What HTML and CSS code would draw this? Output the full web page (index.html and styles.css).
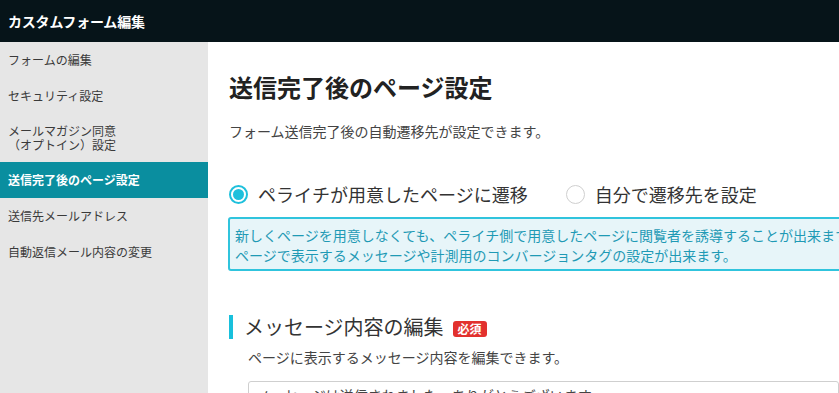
FILE: index.html
```html
<!DOCTYPE html>
<html lang="ja">
<head>
<meta charset="utf-8">
<link rel="stylesheet" href="styles.css">
</head>
<body>
<header class="topbar">カスタムフォーム編集</header>
<div class="layout">
  <nav class="sidebar">
    <div class="nav-item">フォームの編集</div>
    <div class="nav-item">セキュリティ設定</div>
    <div class="nav-item multi">メールマガジン同意<br>（オプトイン）設定</div>
    <div class="nav-item active">送信完了後のページ設定</div>
    <div class="nav-item">送信先メールアドレス</div>
    <div class="nav-item">自動返信メール内容の変更</div>
  </nav>
  <main class="main">
    <h1 class="title">送信完了後のページ設定</h1>
    <p class="desc">フォーム送信完了後の自動遷移先が設定できます。</p>
    <div class="radios">
      <label class="radio checked"><span class="dot"></span>ペライチが用意したページに遷移</label>
      <label class="radio"><span class="dot"></span>自分で遷移先を設定</label>
    </div>
    <div class="info">新しくページを用意しなくても、ペライチ側で用意したページに閲覧者を誘導することが出来ます。<br>ページで表示するメッセージや計測用のコンバージョンタグの設定が出来ます。</div>
    <h2 class="section"><span class="section-text">メッセージ内容の編集</span><span class="badge">必須</span></h2>
    <p class="sub">ページに表示するメッセージ内容を編集できます。</p>
    <div class="textarea">メッセージは送信されました。ありがとうございます。</div>
  </main>
</div>
</body>
</html>
```

FILE: styles.css
```css
* { box-sizing: border-box; }
html, body { margin: 0; padding: 0; }
body {
  width: 839px;
  height: 393px;
  overflow: hidden;
  font-family: "Noto Sans CJK JP", "Noto Sans", sans-serif;
  color: #333;
  background: #fff;
}
.topbar {
  height: 42px;
  background: #061419;
  color: #fff;
  font-weight: bold;
  font-size: 14px;
  line-height: 42px;
  padding-left: 8px;
  letter-spacing: -0.2px;
}
.layout {
  display: flex;
  height: 351px;
}
.sidebar {
  width: 208px;
  flex-shrink: 0;
  background: #e6e6e6;
}
.nav-item {
  font-size: 12px;
  line-height: 16px;
  padding: 10px 8px;
  color: #3a3a3a;
  white-space: nowrap;
}
.nav-item.multi { line-height: 14px; }
.nav-item.active {
  background: #0a8e9f;
  color: #fff;
  font-weight: bold;
}
.main {
  flex: 1;
  padding: 29px 0 0 21px;
  overflow: hidden;
  white-space: nowrap;
}
.title {
  margin: 0;
  font-size: 24px;
  line-height: 32px;
  font-weight: bold;
  color: #222;
}
.desc {
  margin: 18px 0 0;
  font-size: 14px;
  line-height: 20px;
  color: #444;
}
.radios {
  display: flex;
  margin-top: 41px;
  height: 24px;
  align-items: center;
}
.radio {
  display: flex;
  align-items: center;
  font-size: 18px;
  line-height: 24px;
  color: #333;
}
.radio + .radio { margin-left: 38px; }
.dot {
  width: 19px;
  height: 19px;
  border-radius: 50%;
  border: 1px solid #cfcfcf;
  background: #fff;
  margin-right: 10px;
  position: relative;
}
.radio.checked .dot {
  border: 2px solid #1ec0dc;
}
.radio.checked .dot::after {
  content: "";
  position: absolute;
  left: 2px; top: 2px;
  width: 11px; height: 11px;
  border-radius: 50%;
  background: #1ec0dc;
}
.info {
  margin-top: 11px;
  margin-left: -1px;
  width: 640px;
  border: 2px solid #30c4dd;
  border-radius: 3px;
  background: #e7f5f9;
  color: #1f9ab5;
  font-size: 14px;
  line-height: 20px;
  padding: 6px 5px 4px;
}
.section {
  margin: 44px 0 0;
  display: flex;
  align-items: center;
  height: 24px;
  border-left: 4px solid #18c0dc;
  padding-left: 11px;
  font-weight: normal;
}
.section-text {
  font-size: 20px;
  line-height: 24px;
  color: #333;
}
.badge {
  margin-left: 9px;
  background: #e2312e;
  color: #fff;
  font-size: 12px;
  font-weight: bold;
  line-height: 16px;
  padding: 0 5px;
  border-radius: 3px;
  margin-top: 3px;
}
.sub {
  margin: 8px 0 0 19px;
  font-size: 14px;
  line-height: 20px;
  color: #444;
}
.textarea {
  margin: 14px 0 0 19px;
  border: 1px solid #cfcfcf;
  border-radius: 3px;
  height: 60px;
  padding: 3px 7px;
  font-size: 14px;
  line-height: 20px;
  color: #444;
}
```
